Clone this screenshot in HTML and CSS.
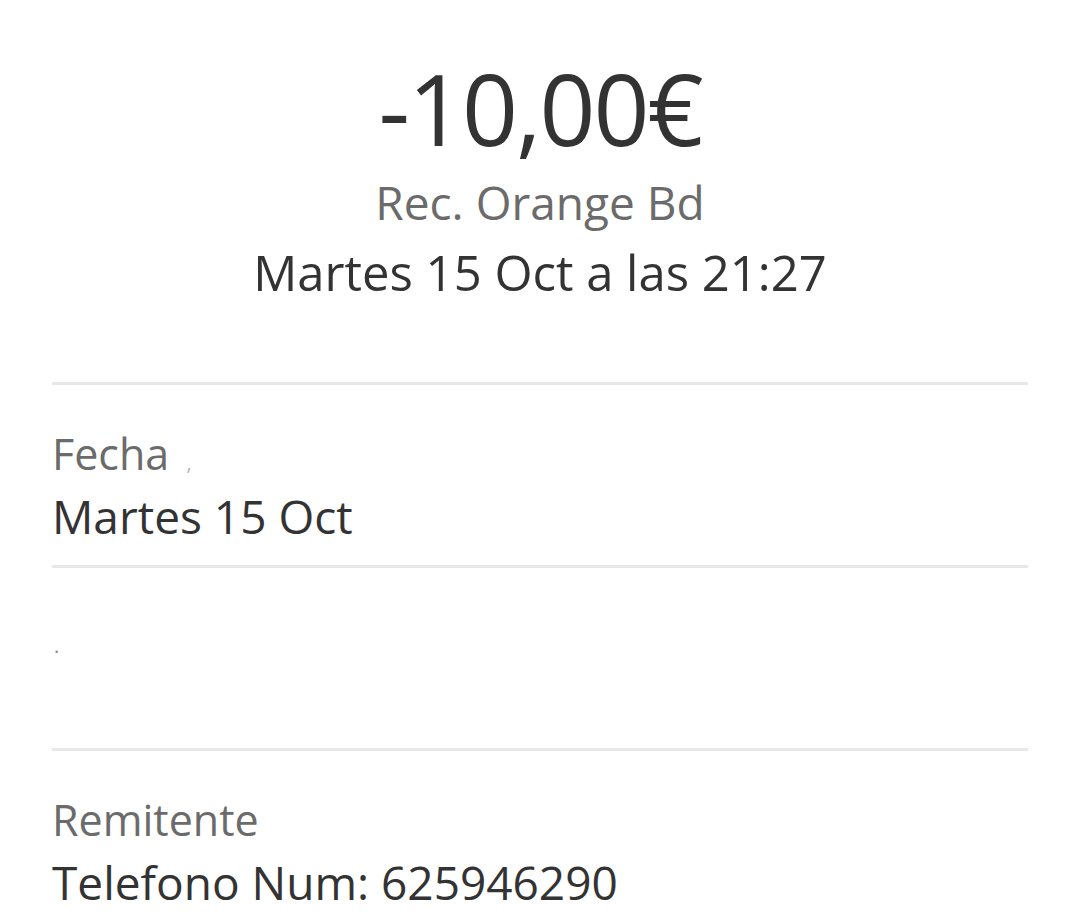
FILE: index.html
```html
<!DOCTYPE html>
<html lang="es">

<head>
    <meta charset="UTF-8">
    <title>Movimiento</title>
    <link rel="stylesheet" href="styles.css">
</head>

<body>
    <div class="header">
        <div class="amount">-10,00€</div>
        <div class="concept">Rec. Orange Bd</div>
        <div class="datetime">Martes 15 Oct a las 21:27</div>
    </div>

    <div class="detail">
        <div class="label">Fecha <span class="faint spaced">,</span></div>
        <div class="value">Martes 15 Oct</div>
    </div>

    <div class="detail">
        <div class="label"><span class="faint dot">.</span></div>
        <div class="value">&nbsp;</div>
    </div>

    <div class="detail">
        <div class="label">Remitente</div>
        <div class="value">Telefono Num: 625946290</div>
    </div>
</body>

</html>
```

FILE: styles.css
```css
body {
    font-family: 'Open Sans', sans-serif;
    color: #333;
    background-color: #fff;
    margin: 0;
    padding: 0 52px;
}

.header {
    text-align: center;
    padding-top: 47px;
    padding-bottom: 72px;
    border-bottom: 3px solid #e6e8ea;
}

.amount {
    font-size: 98px;
    line-height: 123px;
    letter-spacing: -2px;
}

.concept {
    font-size: 46px;
    line-height: 64px;
    color: #6b6b6b;
}

.datetime {
    font-size: 49px;
    line-height: 76px;
}

.detail {
    padding: 40px 0 16px;
    border-bottom: 3px solid #e6e8ea;
}

.label {
    font-size: 43px;
    line-height: 58px;
    color: #6b6b6b;
}

.value {
    font-size: 46px;
    line-height: 66px;
}

.faint {
    color: #b5b5b5;
    font-size: 20px;
    line-height: 1;
}

.spaced {
    margin-left: 6px;
}

.dot {
    color: #888;
    margin-left: 2px;
}
```
